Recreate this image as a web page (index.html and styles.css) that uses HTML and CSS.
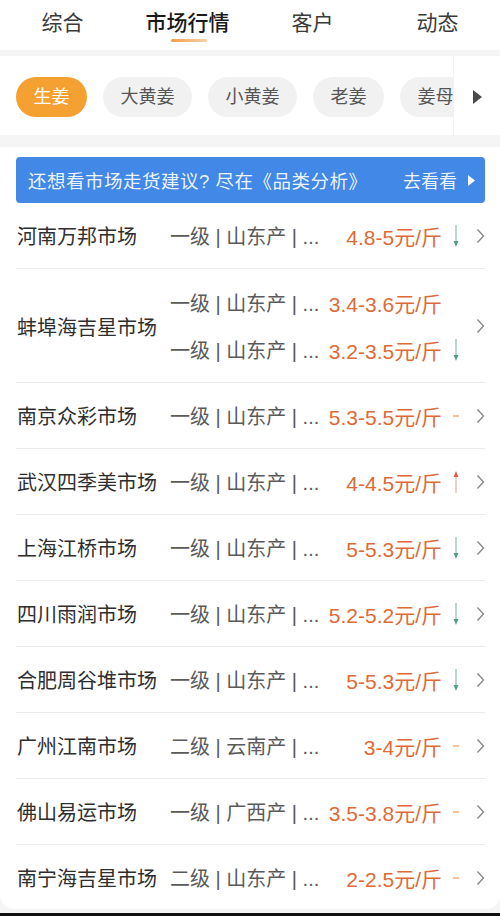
FILE: index.html
```html
<!doctype html>
<html>
<head>
<meta charset="utf-8">
<link rel="stylesheet" href="styles.css">
<title>市场行情</title>
</head>
<body>
<div class="page">

<div class="tabs">
    <span class="tab">综合</span>
    <span class="tab tab-on">市场行情</span>
    <span class="tab">客户</span>
    <span class="tab">动态</span>
</div>

<div class="chips-card">
    <div class="chips">
        <span class="chip chip-on">生姜</span>
        <span class="chip">大黄姜</span>
        <span class="chip">小黄姜</span>
        <span class="chip">老姜</span>
        <span class="chip">姜母</span>
    </div>
    <div class="chips-more">
        <svg width="9" height="14" viewBox="0 0 9 14"><path d="M0 0 L9 7 L0 14 Z" fill="#4a4a4a"/></svg>
    </div>
</div>

<div class="market">
    <div class="banner">
        <span class="banner-text">还想看市场走货建议? 尽在《品类分析》</span>
        <span class="banner-go">去看看
            <svg width="7" height="11" viewBox="0 0 7 11"><path d="M0 0 L7 5.5 L0 11 Z" fill="#fff"/></svg>
        </span>
    </div>

    <div class="list">
        <div class="row">
            <span class="name">河南万邦市场</span>
            <span class="spec">一级 | 山东产 | ...</span>
            <span class="price">4.8-5元/斤</span>
            <span class="trend"><svg width="8" height="24" viewBox="0 0 8 24"><line x1="4" y1="1" x2="4" y2="19" stroke="#7db8a6" stroke-width="1.1"/><path d="M1.6 17 L4 23 L6.4 17 Z" fill="#4a9f86"/></svg></span>
            <span class="more"><svg width="9" height="16" viewBox="0 0 9 16"><path d="M1.5 1.5 L7.5 8 L1.5 14.5" fill="none" stroke="#8a8a8a" stroke-width="1.4"/></svg></span>
        </div>

        <div class="row row-two">
            <span class="name">蚌埠海吉星市场</span>
            <span class="spec">一级 | 山东产 | ...</span>
            <span class="price">3.4-3.6元/斤</span>
            <span class="trend"></span>
            <span class="more"><svg width="9" height="16" viewBox="0 0 9 16"><path d="M1.5 1.5 L7.5 8 L1.5 14.5" fill="none" stroke="#8a8a8a" stroke-width="1.4"/></svg></span>
            <span class="spec">一级 | 山东产 | ...</span>
            <span class="price">3.2-3.5元/斤</span>
            <span class="trend"><svg width="8" height="24" viewBox="0 0 8 24"><line x1="4" y1="1" x2="4" y2="19" stroke="#7db8a6" stroke-width="1.1"/><path d="M1.6 17 L4 23 L6.4 17 Z" fill="#4a9f86"/></svg></span>
        </div>

        <div class="row">
            <span class="name">南京众彩市场</span>
            <span class="spec">一级 | 山东产 | ...</span>
            <span class="price">5.3-5.5元/斤</span>
            <span class="trend"><span class="flat"></span></span>
            <span class="more"><svg width="9" height="16" viewBox="0 0 9 16"><path d="M1.5 1.5 L7.5 8 L1.5 14.5" fill="none" stroke="#8a8a8a" stroke-width="1.4"/></svg></span>
        </div>

        <div class="row">
            <span class="name">武汉四季美市场</span>
            <span class="spec">一级 | 山东产 | ...</span>
            <span class="price">4-4.5元/斤</span>
            <span class="trend"><svg width="8" height="24" viewBox="0 0 8 24"><line x1="4" y1="5" x2="4" y2="23" stroke="#dba8a0" stroke-width="1.1"/><path d="M1.6 7 L4 1 L6.4 7 Z" fill="#e2574c"/></svg></span>
            <span class="more"><svg width="9" height="16" viewBox="0 0 9 16"><path d="M1.5 1.5 L7.5 8 L1.5 14.5" fill="none" stroke="#8a8a8a" stroke-width="1.4"/></svg></span>
        </div>

        <div class="row">
            <span class="name">上海江桥市场</span>
            <span class="spec">一级 | 山东产 | ...</span>
            <span class="price">5-5.3元/斤</span>
            <span class="trend"><svg width="8" height="24" viewBox="0 0 8 24"><line x1="4" y1="1" x2="4" y2="19" stroke="#7db8a6" stroke-width="1.1"/><path d="M1.6 17 L4 23 L6.4 17 Z" fill="#4a9f86"/></svg></span>
            <span class="more"><svg width="9" height="16" viewBox="0 0 9 16"><path d="M1.5 1.5 L7.5 8 L1.5 14.5" fill="none" stroke="#8a8a8a" stroke-width="1.4"/></svg></span>
        </div>

        <div class="row">
            <span class="name">四川雨润市场</span>
            <span class="spec">一级 | 山东产 | ...</span>
            <span class="price">5.2-5.2元/斤</span>
            <span class="trend"><svg width="8" height="24" viewBox="0 0 8 24"><line x1="4" y1="1" x2="4" y2="19" stroke="#7db8a6" stroke-width="1.1"/><path d="M1.6 17 L4 23 L6.4 17 Z" fill="#4a9f86"/></svg></span>
            <span class="more"><svg width="9" height="16" viewBox="0 0 9 16"><path d="M1.5 1.5 L7.5 8 L1.5 14.5" fill="none" stroke="#8a8a8a" stroke-width="1.4"/></svg></span>
        </div>

        <div class="row">
            <span class="name">合肥周谷堆市场</span>
            <span class="spec">一级 | 山东产 | ...</span>
            <span class="price">5-5.3元/斤</span>
            <span class="trend"><svg width="8" height="24" viewBox="0 0 8 24"><line x1="4" y1="1" x2="4" y2="19" stroke="#7db8a6" stroke-width="1.1"/><path d="M1.6 17 L4 23 L6.4 17 Z" fill="#4a9f86"/></svg></span>
            <span class="more"><svg width="9" height="16" viewBox="0 0 9 16"><path d="M1.5 1.5 L7.5 8 L1.5 14.5" fill="none" stroke="#8a8a8a" stroke-width="1.4"/></svg></span>
        </div>

        <div class="row">
            <span class="name">广州江南市场</span>
            <span class="spec">二级 | 云南产 | ...</span>
            <span class="price">3-4元/斤</span>
            <span class="trend"><span class="flat"></span></span>
            <span class="more"><svg width="9" height="16" viewBox="0 0 9 16"><path d="M1.5 1.5 L7.5 8 L1.5 14.5" fill="none" stroke="#8a8a8a" stroke-width="1.4"/></svg></span>
        </div>

        <div class="row">
            <span class="name">佛山易运市场</span>
            <span class="spec">一级 | 广西产 | ...</span>
            <span class="price">3.5-3.8元/斤</span>
            <span class="trend"><span class="flat"></span></span>
            <span class="more"><svg width="9" height="16" viewBox="0 0 9 16"><path d="M1.5 1.5 L7.5 8 L1.5 14.5" fill="none" stroke="#8a8a8a" stroke-width="1.4"/></svg></span>
        </div>

        <div class="row">
            <span class="name">南宁海吉星市场</span>
            <span class="spec">二级 | 山东产 | ...</span>
            <span class="price">2-2.5元/斤</span>
            <span class="trend"><span class="flat"></span></span>
            <span class="more"><svg width="9" height="16" viewBox="0 0 9 16"><path d="M1.5 1.5 L7.5 8 L1.5 14.5" fill="none" stroke="#8a8a8a" stroke-width="1.4"/></svg></span>
        </div>
    </div>
</div>

<div class="bottom-bar"></div>
</div>
</body>
</html>
```

FILE: styles.css
```css
html,
body {
    margin: 0;
    padding: 0;
}
body {
    font-family: "Liberation Sans", "Noto Sans CJK SC", sans-serif;
    background: #f5f5f5;
    color: #333;
}
.page {
    height: 916px;
    display: flex;
    flex-direction: column;
    overflow: hidden;
}

/* top tabs */
.tabs {
    height: 50px;
    background: #fff;
    display: grid;
    grid-template-columns: repeat(4, 1fr);
    flex-shrink: 0;
}
.tab {
    position: relative;
    text-align: center;
    font-size: 21px;
    line-height: 46px;
    color: #3a3a3a;
}
.tab-on {
    color: #1a1a1a;
    font-weight: 500;
}
.tab-on:after {
    content: "";
    position: absolute;
    left: 50%;
    margin-left: -17px;
    top: 39px;
    width: 36px;
    height: 3px;
    border-radius: 2px;
    background: linear-gradient(to right, #f0a04a, #f8d2a6);
}

/* category chips */
.chips-card {
    margin-top: 6px;
    height: 79px;
    background: #fff;
    display: flex;
    align-items: center;
    flex-shrink: 0;
}
.chips {
    width: 437px;
    padding-left: 16px;
    padding-top: 3px;
    display: flex;
    gap: 16px;
    overflow: hidden;
    flex-shrink: 0;
}
.chip {
    flex-shrink: 0;
    height: 40px;
    line-height: 40px;
    padding: 0 17.5px;
    border-radius: 20px;
    background: #f1f1f1;
    color: #555;
    font-size: 18px;
}
.chip-on {
    background: #f5a132;
    color: #fff;
}
.chips-more {
    flex: 1;
    align-self: stretch;
    display: flex;
    align-items: center;
    justify-content: center;
    padding-top: 3px;
    border-left: 1px solid #f2f2f2;
}

/* market list */
.market {
    margin-top: 12px;
    background: #fff;
    border-radius: 0 0 14px 14px;
    padding: 10px 15px 0 16px;
    flex-shrink: 0;
    height: 752px;
}
.banner {
    height: 46px;
    border-radius: 4px;
    background: #4288e7;
    color: rgba(255, 255, 255, 0.93);
    display: flex;
    align-items: center;
    justify-content: space-between;
    padding: 0 10px 0 12px;
}
.banner-text {
    font-size: 18.5px;
    letter-spacing: 0.5px;
}
.banner-go {
    display: flex;
    align-items: center;
    gap: 11px;
    font-size: 18px;
}
.row {
    display: grid;
    grid-template-columns: 154px 1fr auto 28px 15px;
    grid-auto-rows: 47px;
    align-items: center;
    padding: 9px 0;
    border-bottom: 1px solid #ebebeb;
}
.row:last-child {
    border-bottom: none;
}
.row-two {
    padding: 10px 0 9px;
}
.row-two .name,
.row-two .more {
    grid-row: span 2;
}
.name {
    font-size: 20px;
    color: #2e2e2e;
    padding-left: 1px;
    white-space: nowrap;
}
.spec {
    font-size: 20px;
    color: #5a5a5a;
    white-space: nowrap;
}
.price {
    font-size: 21px;
    color: #e06a36;
    text-align: right;
    white-space: nowrap;
}
.trend {
    display: flex;
    justify-content: center;
    align-items: center;
}
.flat {
    width: 6px;
    height: 2px;
    background: #f6c19a;
}
.more {
    display: flex;
    justify-content: flex-end;
    align-items: center;
}
.bottom-bar {
    margin-top: auto;
    height: 3px;
    background: #111;
    flex-shrink: 0;
}
```
